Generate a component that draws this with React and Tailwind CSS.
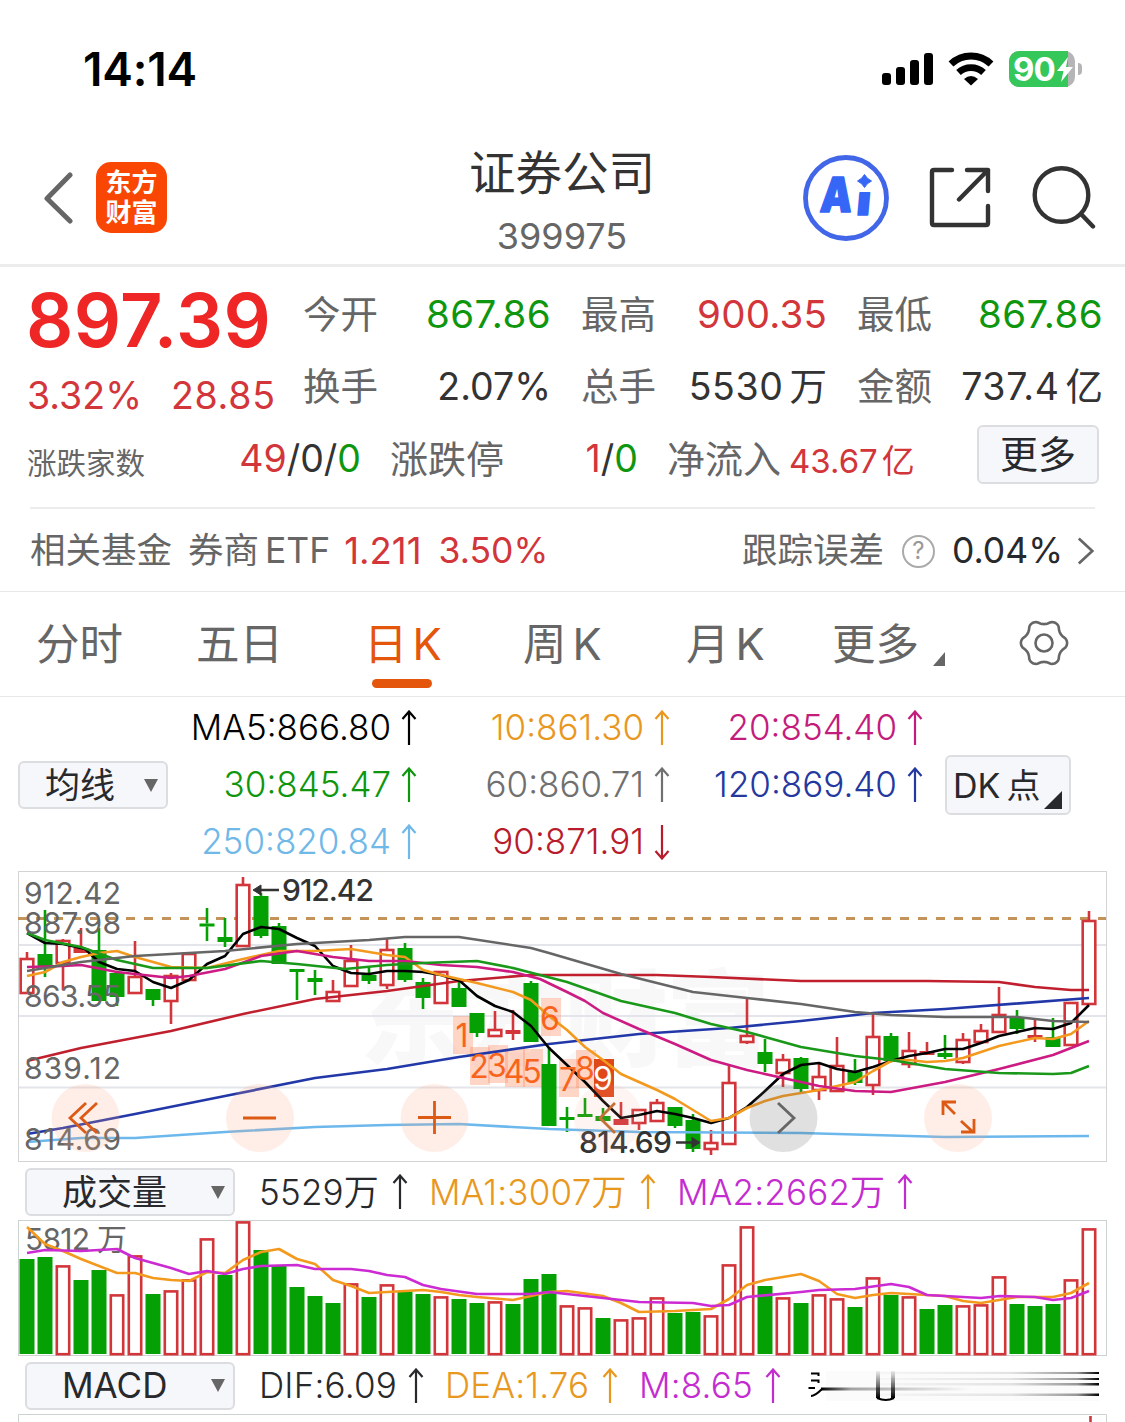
const candles = [
  // [kind, high, bodyTop, bodyBottom, low, volumeTop, volumeKind]   r = up (hollow), R = up (thin body), g = down
  ['r', 952, 958, 993, 993, 1259, 'g'], ['g', 910, 954, 967, 977, 1257], ['r', 939, 940, 963, 990, 1265],
  ['R', 928, 948, 953, 953, 1280, 'g'], ['g', 928, 950, 1001, 1001, 1270], ['g', 973, 973, 997, 1006, 1294, 'r'],
  ['r', 941, 976, 993, 993, 1255], ['g', 989, 989, 1000, 1006, 1294], ['r', 973, 975, 1001, 1024, 1290],
  ['r', 953, 953, 980, 980, 1279], ['g', 908, 923.5, 926.5, 941, 1238, 'r'], ['g', 918, 937, 942, 947, 1275],
  ['r', 877, 884, 946, 946, 1221], ['g', 893, 896, 936, 938, 1250], ['g', 923, 926, 964, 964, 1266],
  ['g', 969, 969, 972, 1000, 1287], ['g', 970, 978, 982, 995, 1296], ['r', 980, 991, 1001, 1001, 1303, 'g'],
  ['r', 945, 960, 986, 986, 1283], ['g', 966, 975, 981, 984, 1297], ['r', 938, 949, 985, 989, 1284],
  ['g', 943, 948, 980, 982, 1292], ['g', 978, 982, 998, 1009, 1294], ['r', 971, 971, 1003, 1003, 1296],
  ['g', 982, 988, 1007, 1007, 1299], ['g', 1013, 1013, 1033, 1037, 1303], ['r', 1011, 1029, 1036, 1036, 1301],
  ['R', 1010, 1030, 1034, 1040, 1304, 'g'], ['g', 981, 983, 1042, 1042, 1279], ['g', 1047, 1064, 1126, 1126, 1274],
  ['g', 1107, 1117, 1120, 1132, 1305, 'r'], ['g', 1098, 1114, 1117, 1117, 1307, 'r'], ['g', 1108, 1116, 1121, 1122, 1318],
  ['R', 1102, 1119, 1125, 1125, 1319, 'r'], ['r', 1109, 1109, 1123, 1130, 1317], ['r', 1099, 1102, 1121, 1121, 1297],
  ['g', 1107, 1107, 1126, 1128, 1313], ['g', 1114, 1120, 1149, 1152, 1312], ['r', 1130, 1142, 1149, 1155, 1315],
  ['r', 1066, 1082, 1144, 1144, 1264], ['r', 998, 1035, 1042, 1044, 1226], ['g', 1039, 1052, 1064, 1072, 1286],
  ['r', 1054, 1059, 1073, 1087, 1297], ['g', 1057, 1058, 1089, 1093, 1303], ['r', 1063, 1076, 1090, 1100, 1294],
  ['r', 1037, 1065, 1091, 1091, 1298], ['g', 1059, 1072, 1083, 1085, 1307], ['r', 1013, 1036, 1085, 1095, 1277],
  ['g', 1033, 1036, 1061, 1061, 1295], ['r', 1032, 1050, 1064, 1068, 1296], ['R', 1042, 1051, 1055, 1055, 1309, 'g'],
  ['g', 1035, 1053, 1057, 1059, 1305], ['r', 1033, 1039, 1062, 1064, 1305], ['r', 1024, 1030, 1042, 1042, 1304],
  ['r', 987, 1014, 1032, 1032, 1276], ['g', 1010, 1018, 1029, 1034, 1304], ['R', 1018, 1035, 1038, 1042, 1306, 'g'],
  ['g', 1018, 1037, 1047, 1047, 1304], ['r', 1002, 1002, 1045, 1045, 1279], ['r', 911, 920, 1004, 1004, 1228],
]

const priceLines = [
  { color: '#c01f2e', points: '27,1061 81,1048 171,1031 243,1014 315,999 387,991 459,981 531,975 657,975 711,977 801,981 927,981 999,982 1035,987 1071,990 1089,990' },
  { color: '#6cb8ec', points: '27,1142 81,1138 135,1138 225,1132 315,1127 387,1125 459,1124 549,1129 639,1132 801,1133 945,1137 1089,1136' },
  { color: '#2238a8', points: '27,1134 63,1128 135,1114 225,1096 315,1078 387,1069 459,1057 549,1044 639,1034 729,1028 801,1021 873,1013 945,1009 1089,998' },
  { color: '#000000', points: '27,933 45,943 63,944 85,949 99,962 117,969 135,971 153,982 171,988 189,980 207,964 225,956 243,934 261,927 279,929 297,938 315,946 333,966 351,973 369,974 387,971 405,971 423,972 441,975 460,981 477,996 495,1006 513,1012 531,1026 549,1048 567,1065 585,1082 603,1101 621,1118 639,1115 657,1111 675,1114 693,1118 711,1123 729,1118 747,1107 765,1091 783,1074 801,1065 819,1063 837,1069 855,1072 873,1067 891,1061 909,1056 927,1053 945,1049 963,1049 981,1043 999,1036 1017,1032 1035,1028 1053,1029 1071,1023 1089,1005' },
  { color: '#f39a1e', points: '27,976 45,972 63,962 81,957 99,953 117,951 135,957 153,962 171,967 207,968 243,959 279,951 315,951 351,949 369,952 387,955 405,957 423,970 441,975 477,983 513,992 531,1000 549,1016 567,1030 585,1047 603,1060 621,1074 639,1082 657,1090 675,1099 693,1110 711,1121 729,1118 747,1108 765,1101 783,1096 819,1090 855,1082 873,1071 891,1061 909,1060 927,1062 945,1061 963,1058 981,1052 999,1046 1035,1038 1053,1039 1071,1034 1089,1021' },
  { color: '#cc1b82', points: '27,967 63,966 81,965 117,972 153,976 171,978 189,976 225,969 261,956 297,951 333,957 369,961 405,961 441,965 477,967 513,972 540,979 567,992 585,1001 603,1013 639,1029 675,1044 711,1060 747,1070 783,1078 819,1086 855,1091 891,1092 945,1082 999,1069 1053,1055 1089,1041' },
  { color: '#1a981a', points: '27,933 45,940 81,947 117,960 153,968 207,968 261,961 297,964 345,969 387,965 423,963 477,961 513,968 567,982 621,1001 675,1013 711,1024 747,1032 765,1037 801,1047 855,1056 891,1060 945,1069 999,1073 1053,1074 1071,1073 1089,1066' },
  { color: '#666666', points: '27,971 81,962 135,956 225,951 297,944 369,940 405,937 459,937 531,948 549,953 621,974 657,983 693,992 747,998 801,1004 855,1012 891,1015 945,1017 1017,1017 1053,1021 1089,1022' },
]

const volumeLines = [
  { color: '#f39a1e', points: '27,1227 45,1244 63,1251 81,1259 99,1266 117,1273 135,1273 153,1278 171,1280 189,1281 207,1272 225,1273 243,1260 261,1252 279,1249 297,1259 315,1264 333,1280 351,1286 369,1293 387,1292 405,1291 423,1290 441,1292 459,1295 477,1297 513,1300 531,1296 549,1292 567,1291 603,1296 621,1303 639,1312 675,1311 711,1309 729,1299 747,1285 765,1280 801,1274 819,1281 837,1294 855,1298 873,1295 891,1293 945,1296 963,1301 981,1303 1017,1297 1053,1297 1071,1293 1089,1283' },
  { color: '#cc2ad2', points: '27,1253 45,1250 81,1251 117,1249 135,1258 171,1268 189,1274 207,1271 225,1274 243,1269 261,1266 297,1265 315,1269 351,1269 369,1271 387,1275 405,1277 423,1285 441,1289 477,1294 531,1294 549,1292 603,1298 639,1302 693,1303 711,1306 729,1305 747,1297 801,1292 819,1290 855,1289 891,1284 909,1287 927,1295 981,1298 1000,1296 1035,1297 1053,1300 1071,1298 1089,1291' },
]

const priceLabels = [
  { value: '912.42', y: 904 },
  { value: '887.98', y: 934 },
  { value: '863.55', y: 1007 },
  { value: '839.12', y: 1079 },
  { value: '814.69', y: 1150 },
]

// nine-turn counter: [digit, x, boxTop, baseline]
const turns = [
  ['1', 453, 1016, 1047], ['2', 470, 1047, 1078], ['3', 488, 1045, 1077], ['4', 505, 1049, 1083],
  ['5', 523, 1049, 1083], ['6', 541, 998, 1030], ['7', 559, 1059, 1091], ['8', 576, 1050, 1080], ['9', 594, 1059, 1090],
]

const GREEN = '#04a004'
const RED = '#d2353a'

function Arrow({ down = false, className = '' }) {
  return (
    <svg viewBox="0 0 16 36" className={`h-9 w-4 shrink-0 ${className}`} fill="none" stroke="currentColor" strokeWidth="2.2">
      <path d={down ? 'M8 1V34M1.5 27L8 34.5L14.5 27' : 'M8 35V2M1.5 9L8 1.5L14.5 9'} />
    </svg>
  )
}

function Dropdown({ children, className }) {
  return (
    <div className={`flex h-12 shrink-0 items-center justify-between rounded-md border-2 border-[#dcdde0] bg-[#f6f7fa] pr-[8px] text-[35px] text-[#28292c] ${className}`}>
      <span className="whitespace-nowrap">{children}</span>
      <svg viewBox="0 0 14 13" className="h-[13px] w-[14px] fill-[#666]">
        <path d="M0 0H14L7 13Z" />
      </svg>
    </div>
  )
}

function StatusBar() {
  return (
    <div className="flex h-[138px] items-center justify-between pr-[43px] pl-[83px]">
      <span className="text-[46px] font-semibold tracking-[-0.2px] text-black">14:14</span>
      <div className="flex items-center">
        <svg viewBox="0 0 52 34" className="h-[34px] w-[52px]">
          <rect x="0" y="21" width="9" height="12" rx="3" />
          <rect x="14" y="15" width="9" height="18" rx="3" />
          <rect x="28" y="8" width="9" height="25" rx="3" />
          <rect x="42" y="1" width="9" height="32" rx="3" />
        </svg>
        <svg viewBox="0 0 46 34" className="ml-[14px] h-[34px] w-[46px]">
          <path d="M3 12A29 29 0 0 1 43 12" fill="none" stroke="#000" strokeWidth="7" />
          <path d="M10.5 20.5A18.5 18.5 0 0 1 35.5 20.5" fill="none" stroke="#000" strokeWidth="6.8" />
          <path d="M16 27Q23 21 30 27L23 33.5Z" />
        </svg>
        <div className="relative ml-[15px] flex h-9 w-[66px] items-center rounded-[10px] bg-[#b5b5b8]">
          <div className="absolute inset-y-0 left-0 w-[59px] rounded-l-[10px] bg-[#35c759]" />
          <span className="relative ml-1 text-[33px] leading-9 font-bold tracking-[-1px] text-white">90</span>
          <svg viewBox="0 0 17 25" className="absolute right-[2px] h-[25px] w-[17px] fill-white">
            <path d="M12 0L1 14H7.5L5 25L17 10H10Z" />
          </svg>
        </div>
        <div className="ml-[3px] h-3 w-1 rounded-r-full bg-[#b5b5b8]" />
      </div>
    </div>
  )
}

function Header() {
  return (
    <div className="flex h-[129px] items-start border-b-3 border-[#ececec]">
      <svg viewBox="0 0 30 52" className="mt-[34px] ml-[43px] h-[52px] w-[30px]" fill="none" stroke="#666" strokeWidth="5" strokeLinecap="round" strokeLinejoin="round">
        <path d="M27 3L4 26.5L27 49" />
      </svg>
      <div className="mt-6 ml-[23px] flex size-[71px] flex-col items-center justify-center rounded-[15px] bg-[#fa4603] text-[26px] leading-[30px] font-bold text-white">
        <span>东方</span>
        <span>财富</span>
      </div>
      <div className="ml-[272px] flex w-[246px] flex-col items-center">
        <h1 className="mt-[7px] text-[46.5px] leading-[56px] text-[#333]">证券公司</h1>
        <span className="mt-[14px] text-[36px] leading-[42px] text-[#666]">399975</span>
      </div>
      <svg viewBox="0 0 88 88" className="mt-4 ml-[117px] h-[88px] w-[88px]">
        <circle cx="44" cy="44" r="40.5" fill="none" stroke="#4166e8" strokeWidth="4.8" />
        <g transform="skewX(-5)" fill="#3566f5" stroke="#3566f5" strokeLinejoin="round" className="font-black">
          <text x="22.5" y="58.5" fontSize="48" textLength="32" lengthAdjust="spacingAndGlyphs" strokeWidth="1.5">A</text>
          <text x="59" y="61" fontSize="41" textLength="14" lengthAdjust="spacingAndGlyphs" strokeWidth="1.5">ı</text>
        </g>
        <path d="M62.500 20.500Q65 25 69.500 27Q65 29 62.500 33.500Q60 29 55.500 27Q60 25 62.500 20.500Z" fill="#3566f5" stroke="#3566f5" />
      </svg>
      <svg viewBox="0 0 62 62" className="mt-[29px] ml-[39px] h-[62px] w-[62px]" fill="none" stroke="#333" strokeWidth="4.4" strokeLinecap="round" strokeLinejoin="round">
        <path d="M23 3H5Q3 3 3 5V56Q3 58 5 58H57Q59 58 59 56V39" />
        <path d="M38 3H59V24M59 3L30 32.5" />
      </svg>
      <svg viewBox="0 0 64 64" className="mt-[28px] ml-[41px] h-[64px] w-[64px]" fill="none" stroke="#333" strokeWidth="4.4" strokeLinecap="round">
        <circle cx="29.5" cy="29" r="26.8" />
        <path d="M49.5 48.5L61 60.5" />
      </svg>
    </div>
  )
}

function Stat({ label, value, className }) {
  return (
    <div className="flex h-[72px] items-center justify-between">
      <span className="text-[37.5px] text-[#666]">{label}</span>
      <span className={`whitespace-nowrap ${className}`}>{value}</span>
    </div>
  )
}

function Quote() {
  return (
    <div className="h-[240px] pt-3">
      <div className="flex">
        <div className="ml-[26px] w-[277px]">
          <div className="-mt-px text-[74px] leading-[84px] font-semibold tracking-[0.4px] text-[#ee2626]">897.39</div>
          <div className="mt-[10px] ml-px flex gap-[29px] text-[37.5px] leading-[48px] text-[#d2353a]">
            <span>3.32%</span>
            <span className="tracking-[0.7px]">28.85</span>
          </div>
        </div>
        <div className="grid w-[799px] grid-cols-[248px_246px_246px] gap-x-[30px]">
          <Stat label="今开" value="867.86" className="text-[38.5px] tracking-[0.4px] text-[#0f960f]" />
          <Stat label="最高" value="900.35" className="text-[38.5px] tracking-[0.2px] text-[#d2353a]" />
          <Stat label="最低" value="867.86" className="text-[38.5px] tracking-[0.4px] text-[#0f960f]" />
          <Stat label="换手" value="2.07%" className="text-[37.5px] text-[#333]" />
          <Stat label="总手" value={<><span className="tracking-[0.6px]">5530</span><span className="ml-1.5">万</span></>} className="text-[37.5px] text-[#333]" />
          <Stat label="金额" value={<><span className="tracking-[0.6px]">737.4</span><span className="ml-1.5">亿</span></>} className="text-[37.5px] text-[#333]" />
        </div>
      </div>
      <div className="flex h-[72px] items-center pr-[26px] pl-[27px] whitespace-nowrap">
        <span className="w-[150px] pt-2 text-[29.5px] text-[#666]">涨跌家数</span>
        <span className="w-[184px] text-right text-[37.5px] text-[#333]">
          <span className="text-[#d2353a]">49</span>/0/<span className="text-[#0f960f]">0</span>
        </span>
        <span className="ml-[29px] text-[38px] text-[#666]">涨跌停</span>
        <span className="w-[134px] text-right text-[37.5px] text-[#333]">
          <span className="text-[#d2353a]">1</span>/<span className="text-[#0f960f]">0</span>
        </span>
        <span className="ml-[29px] text-[38px] text-[#666]">净流入</span>
        <span className="ml-2 pt-1.5 text-[33px] text-[#d2353a]">43.67<span className="ml-1">亿</span></span>
        <span className="-mt-2.5 ml-auto flex h-[59px] w-[122px] items-center justify-center rounded-md border-2 border-[#dcdde0] bg-[#f6f7fa] text-[38px] text-[#28292c]">更多</span>
      </div>
    </div>
  )
}

function FundRow() {
  return (
    <div className="border-b border-[#e8e8e8]">
      <div className="mx-[30px] flex h-[84px] items-center border-t-2 border-[#ececec] pt-0.5 text-[35.5px] whitespace-nowrap text-[#666]">
        <span>相关基金</span>
        <span className="ml-4">券商<span className="ml-1.5">ETF</span></span>
        <span className="ml-[14px] text-[36.5px] text-[#d2353a]">1.211</span>
        <span className="ml-[17px] text-[#d2353a]">3.50%</span>
        <span className="ml-auto">跟踪误差</span>
        <span className="ml-[18px] flex size-[33px] items-center justify-center rounded-full border-2 border-[#aaa] text-[24px] text-[#999]">?</span>
        <span className="ml-[17px] text-[#28292c]">0.04%</span>
        <svg viewBox="0 0 20 32" className="ml-[14px] h-8 w-[18px]" fill="none" stroke="#666" strokeWidth="3">
          <path d="M2 2L17 16L2 30" />
        </svg>
      </div>
    </div>
  )
}

// outline of a six-lobed cog, centred in a 50 x 50 box
const gearPoints = Array.from({ length: 120 }, (_, i) => {
  const angle = (i / 120) * Math.PI * 2
  const wave = Math.cos(6 * angle)
  const radius = 21 + 2.1 * Math.sign(wave) * Math.pow(Math.abs(wave), 0.75)
  return `${(25 + radius * Math.cos(angle)).toFixed(2)},${(25 + radius * Math.sin(angle)).toFixed(2)}`
}).join(' ')

function Tabs() {
  return (
    <div className="flex h-[105px] items-start border-b border-[#e8e8e8] pt-[18px] pl-9 text-[43.5px] leading-[68px] whitespace-nowrap text-[#666]">
      <span className="w-[160px]">分时</span>
      <span className="w-[168px]">五日</span>
      <div className="w-[159px] text-[#e4560c]">
        <div>日<span className="ml-[5px]">K</span></div>
        <div className="mt-px ml-2 h-[9px] w-[60px] rounded-full bg-[#e4560c]" />
      </div>
      <span className="w-[163px]">周<span className="ml-1.5">K</span></span>
      <span className="w-[146px]">月<span className="ml-1.5">K</span></span>
      <span>更多</span>
      <svg viewBox="0 0 12 14" className="mt-[42px] ml-[14px] h-[14px] w-3 fill-[#666]">
        <path d="M12 0V14H0Z" />
      </svg>
      <svg viewBox="0 0 50 50" className="mt-[8px] ml-[74px] size-[50px]" fill="none" stroke="#666" strokeWidth="2.6" strokeLinejoin="round">
        <polygon points={gearPoints} />
        <circle cx="25" cy="25" r="8.5" />
      </svg>
    </div>
  )
}

const averages = [
  { text: 'MA5:866.80', className: 'text-black' },
  { text: '10:861.30', className: 'text-[#e8981e]' },
  { text: '20:854.40', className: 'text-[#c41c7c]' },
  { text: '30:845.47', className: 'text-[#0f960f]' },
  { text: '60:860.71', className: 'text-[#707070]' },
  { text: '120:869.40', className: 'text-[#2438a0]' },
  { text: '250:820.84', className: 'text-[#70b8e8]' },
  { text: '90:871.91', className: 'text-[#b81c2c]', down: true },
]

function Averages() {
  return (
    <div className="flex h-[174px] pl-[18px]">
      <Dropdown className="mt-[64px] w-[150px] pl-[25px]">均线</Dropdown>
      <div className="-ml-1 grid grid-cols-[253px_253px_253px] grid-rows-[57px_57px_57px] pt-[2px] text-[35px] font-[350]">
        {averages.map((item) => (
          <div key={item.text} className={`flex items-center justify-end ${item.className}`}>
            {item.text}
            <Arrow down={item.down} className="ml-[10px]" />
          </div>
        ))}
      </div>
      <div className="mt-[58px] ml-[22px] flex h-[60px] w-[126px] items-center rounded-md border-2 border-[#dcdde0] bg-[#f6f7fa] pl-[6px] text-[34px] whitespace-nowrap text-[#28292c]">
        DK<span className="ml-1.5">点</span>
        <svg viewBox="0 0 18 18" className="mt-[30px] ml-1 h-[18px] w-[18px] shrink-0 fill-[#28292c]">
          <path d="M18 0V18H0Z" />
        </svg>
      </div>
    </div>
  )
}

function Candle({ data, x }) {
  const [kind, high, top, bottom, low] = data
  const color = kind === 'g' ? GREEN : RED
  return (
    <g stroke={color} strokeWidth="2.6">
      {high < top && <path d={`M${x} ${high}V${top}`} />}
      {low > bottom && <path d={`M${x} ${bottom}V${low}`} />}
      {kind === 'r' ? (
        <rect x={x - 6.3} y={top + 1} width="12.6" height={bottom - top - 1} fill="#fff" />
      ) : (
        <rect x={x - 7.5} y={top} width="15" height={bottom - top} fill={color} stroke="none" />
      )}
    </g>
  )
}

function PriceChart() {
  return (
    <svg viewBox="18 871 1090 291" className="ml-[18px] block h-[291px] w-[1090px]">
      <rect x="18.5" y="871.5" width="1088" height="290" fill="#fff" stroke="#d4d4d4" />
      <text x="360" y="1058" fontSize="104" fill="#f8f8f9" textLength="410" className="font-black">东方财富</text>
      <path d="M19 945H1106M19 1016H1106M19 1087.5H1106" stroke="#e4e5ea" strokeWidth="1.8" />
      <path d="M18 918.5H1106" stroke="#c4935a" strokeWidth="3" strokeDasharray="9 9" />
      {turns.map(([digit, x, top]) => (
        <rect key={digit} x={x} y={top} width="20" height="38" fill={digit === '9' ? '#df4818' : '#ff8a5c'} opacity={digit === '9' ? 1 : 0.35} />
      ))}
      {candles.map((data, i) => (
        <Candle key={i} data={data} x={27 + i * 18} />
      ))}
      {priceLines.map((line) => (
        <polyline key={line.color} points={line.points} fill="none" stroke={line.color} strokeWidth="2.6" strokeLinejoin="round" />
      ))}
      {turns.map(([digit, x, , baseline]) => (
        <text key={digit} x={x + 9} y={baseline} fontSize="32" textAnchor="middle" fill={digit === '9' ? '#fff' : '#f8641c'}>{digit}</text>
      ))}
      {priceLabels.map((label) => (
        <text key={label.value} x="24" y={label.y} fontSize="30" textLength="97" fill="#666">{label.value}</text>
      ))}
      <g fill="#333" stroke="#333" strokeWidth="2.4">
        <path d="M258 890H279M676 1142.5H692" />
        <path d="M253 890L261 885V895ZM700 1142.5L692 1137.5V1147.5Z" strokeWidth="1" />
      </g>
      <g fill="#333" fontSize="30" className="font-medium">
        <text x="282" y="901" textLength="92">912.42</text>
        <text x="579" y="1153" textLength="93">814.69</text>
      </g>
      <g fill="#f8a888" fillOpacity="0.2">
        <circle cx="85.5" cy="1118" r="34" />
        <circle cx="260" cy="1118" r="34" />
        <circle cx="434.5" cy="1118" r="34" />
        <circle cx="608" cy="1118" r="34" opacity="0.6" />
        <circle cx="783.5" cy="1118" r="34" fill="#666" />
        <circle cx="958" cy="1118" r="34" />
      </g>
      <g fill="none" stroke="#dc5a14" strokeWidth="2.8">
        <path d="M86 1103L70 1118L86 1133M97 1103L81 1118L97 1133" />
        <path d="M243 1118H276" />
        <path d="M418 1117.5H451M434.5 1101V1134" />
        <path d="M615 1103L600 1118L615 1133" stroke="#c47038" />
        <path d="M778 1103L794 1118L778 1133" stroke="#666" />
        <path d="M943 1115V1102H956M943 1102L955 1114M961 1132H974V1119M973 1132L961 1121" />
      </g>
    </svg>
  )
}

function VolumeChart() {
  return (
    <svg viewBox="18 1219 1090 138" className="ml-[18px] block h-[138px] w-[1090px]">
      <rect x="18.5" y="1220.5" width="1088" height="135" fill="#fff" stroke="#ccd2d0" />
      {candles.map((data, i) => {
        const x = 27 + i * 18
        const top = data[5]
        const hollow = (data[6] || data[0]) === 'r'
        return hollow ? (
          <rect key={i} x={x - 6.2} y={top + 1.4} width="12.4" height={1352.8 - top} fill="#fff" stroke={RED} strokeWidth="2.6" />
        ) : (
          <rect key={i} x={x - 7.5} y={top} width="15" height={1354 - top} fill={GREEN} />
        )
      })}
      <text x="25" y="1250" fontSize="30" textLength="102" fill="#666">5812 万</text>
      {volumeLines.map((line) => (
        <polyline key={line.color} points={line.points} fill="none" stroke={line.color} strokeWidth="2.6" strokeLinejoin="round" />
      ))}
    </svg>
  )
}

function Indicator({ text, className }) {
  return (
    <div className={`flex shrink-0 items-center justify-between font-[350] tracking-[0.2px] whitespace-nowrap ${className}`}>
      {text}
      <Arrow />
    </div>
  )
}

// news ticker caught in the middle of its transition
function Ticker() {
  return (
    <svg viewBox="808 1366 292 36" className="ml-[27px] h-9 w-[292px]" fill="none" stroke="#000" strokeWidth="2">
      <defs>
        <linearGradient id="fadeRight" x1="0" x2="1">
          <stop offset="0" stopColor="#000" stopOpacity="0.02" />
          <stop offset="0.6" stopColor="#000" stopOpacity="0.1" />
          <stop offset="0.9" stopColor="#000" stopOpacity="0.4" />
          <stop offset="1" stopColor="#000" />
        </linearGradient>
        <linearGradient id="fadeLeft" x1="0" x2="1">
          <stop offset="0" stopColor="#000" />
          <stop offset="0.2" stopColor="#000" stopOpacity="0.35" />
          <stop offset="1" stopColor="#000" stopOpacity="0" />
        </linearGradient>
        <linearGradient id="fadeUp" x1="0" x2="0" y1="0" y2="1">
          <stop offset="0" stopColor="#000" stopOpacity="0.05" />
          <stop offset="1" stopColor="#000" />
        </linearGradient>
      </defs>
      <rect x="826" y="1369" width="273" height="30" fill="#fbfbfb" stroke="none" />
      <path d="M811 1371.5H818.5V1374M811 1378.5H818.5V1381M808.5 1386H815M811 1394Q815 1394 822 1387" />
      <rect x="821" y="1385.5" width="150" height="3" fill="url(#fadeLeft)" stroke="none" />
      <g fill="url(#fadeRight)" stroke="none">
        <rect x="880" y="1370" width="219" height="2" />
        <rect x="880" y="1376" width="219" height="2" />
        <rect x="880" y="1381" width="219" height="2.5" />
        <rect x="880" y="1391.5" width="219" height="2.5" />
      </g>
      <rect x="876" y="1369" width="4" height="27" fill="url(#fadeUp)" stroke="none" />
      <rect x="891" y="1369" width="4" height="27" fill="url(#fadeUp)" stroke="none" />
      <path d="M877 1396Q886 1400 894 1396" />
    </svg>
  )
}

export default function App() {
  return (
    <div className="h-[1422px] w-[1125px] overflow-hidden bg-white font-['Inter','Noto_Sans_CJK_SC',sans-serif] font-normal">
      <StatusBar />
      <Header />
      <Quote />
      <FundRow />
      <Tabs />
      <Averages />
      <PriceChart />
      <div className="flex h-[57px] items-center pt-[3px] pl-[25px] text-[35px]">
        <Dropdown className="w-[210px] pl-[35px]">成交量</Dropdown>
        <Indicator text="5529万" className="ml-[24px] w-[149px] text-[#28292c]" />
        <Indicator text="MA1:3007万" className="ml-[21px] w-[227px] text-[#e8981e]" />
        <Indicator text="MA2:2662万" className="ml-[21px] w-[236px] text-[#c42cd0]" />
      </div>
      <VolumeChart />
      <div className="flex h-[57px] items-center pl-[25px] text-[35px]">
        <Dropdown className="w-[210px] pl-[35px]">MACD</Dropdown>
        <Indicator text="DIF:6.09" className="ml-[24px] w-[165px] text-[#28292c]" />
        <Indicator text="DEA:1.76" className="ml-[21px] w-[173px] text-[#e8981e]" />
        <Indicator text="M:8.65" className="ml-[21px] w-[142px] text-[#c42cd0]" />
        <Ticker />
      </div>
      <svg viewBox="18 1414 1090 8" className="ml-[18px] block h-2 w-[1090px]" fill="none">
        <path d="M18.5 1422V1414.5H1106.5V1422" stroke="#ccd2d0" />
        <path d="M1090.5 1416V1422" stroke="#d2353a" strokeWidth="2.6" />
      </svg>
    </div>
  )
}
